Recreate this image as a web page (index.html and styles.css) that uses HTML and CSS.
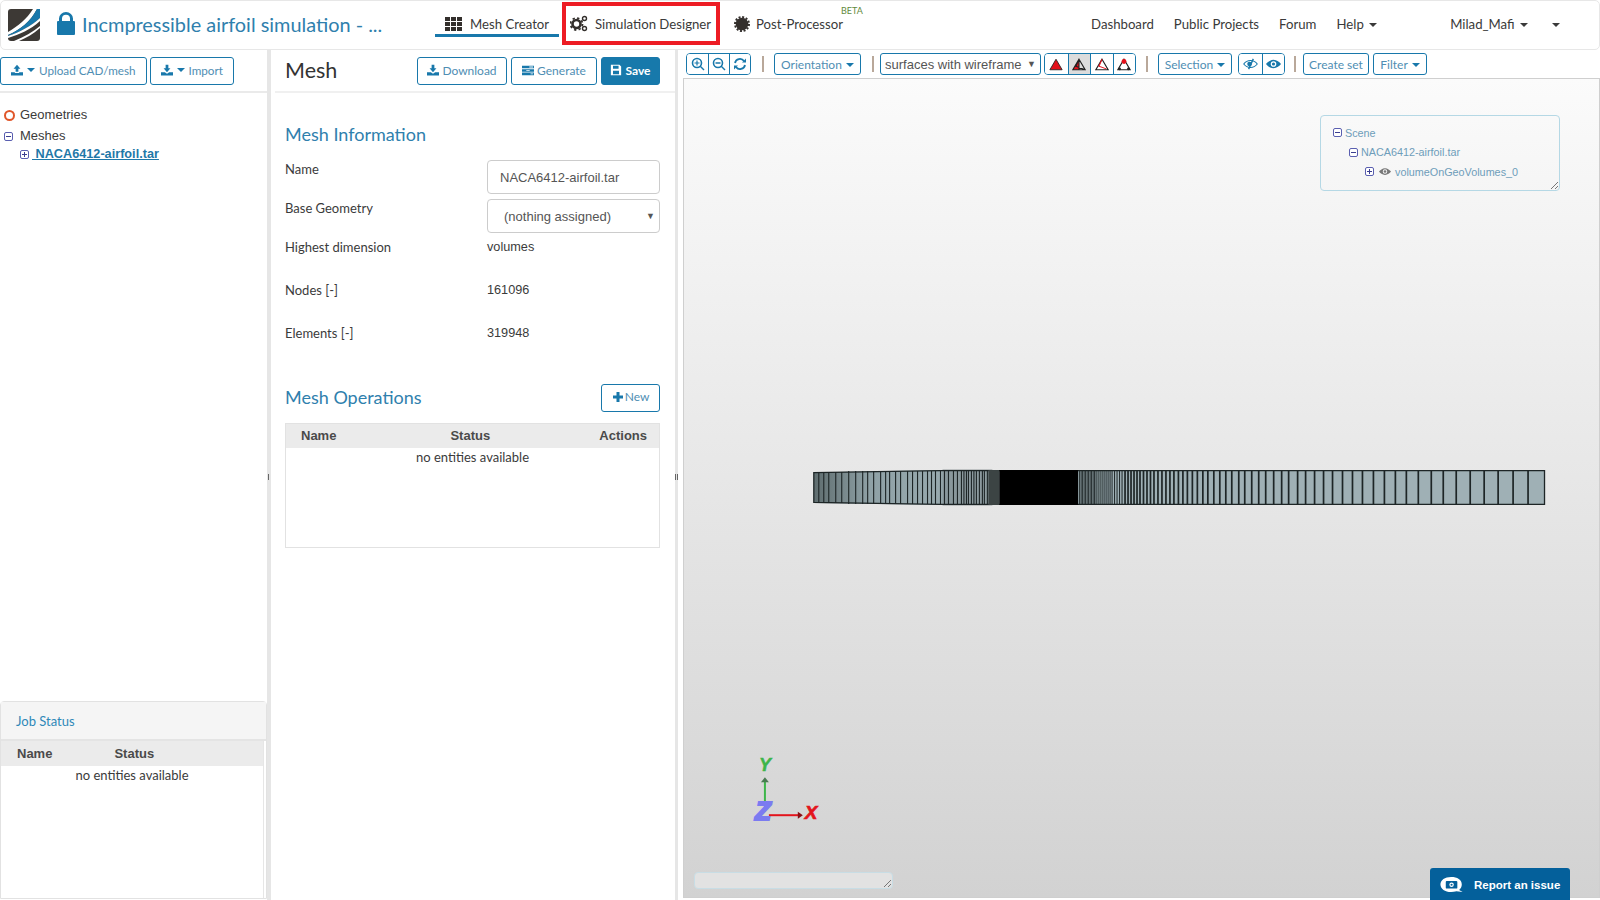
FILE: index.html
```html
<!DOCTYPE html>
<html lang="en">
<head>
<meta charset="utf-8">
<title>Incmpressible airfoil simulation</title>
<link rel="stylesheet" href="styles.css">
</head>
<body>
<svg class="defs" width="0" height="0" aria-hidden="true">
  <symbol id="i-upload" viewBox="0 0 14 14"><path d="M7 1 11 5.500H8.600V9H5.400V5.500H3z"/><path d="M0 9.500H4.500V10.500H9.500V9.500H14V13.500H0z"/></symbol>
  <symbol id="i-download" viewBox="0 0 14 14"><path d="M5.400 1H8.600V5H11L7 9.500 3 5H5.400z"/><path d="M0 9.500H4.500L7 11.500 9.500 9.500H14V13.500H0z"/></symbol>
  <symbol id="i-tasks" viewBox="0 0 14 14"><path d="M0 2H14V5H0zM0 6H14V9H0zM0 10H14V13H0z"/><path fill="#fff" d="M8.500 3H13V4H8.500zM5 7H9V8H5zM10 11H13V12H10z"/></symbol>
  <symbol id="i-save" viewBox="0 0 14 14"><path fill-rule="evenodd" d="M1 1H11L13 3V13H1zM3.500 2V5.500H10V2zM3.500 8V12H10.500V8z"/></symbol>
  <symbol id="i-plus" viewBox="0 0 12 12"><path d="M4.500 1H7.500V4.500H11V7.500H7.500V11H4.500V7.500H1V4.500H4.500z"/></symbol>
  <symbol id="i-zin" viewBox="0 0 14 14"><circle cx="6" cy="6" r="4.500" fill="none" stroke="currentColor" stroke-width="1.600"/><path d="M9.500 8.500 13.500 12.500 12.500 13.500 8.500 9.500zM5.400 3.500H6.600V5.400H8.500V6.600H6.600V8.500H5.400V6.600H3.500V5.400H5.400z"/></symbol>
  <symbol id="i-zout" viewBox="0 0 14 14"><circle cx="6" cy="6" r="4.500" fill="none" stroke="currentColor" stroke-width="1.600"/><path d="M9.500 8.500 13.500 12.500 12.500 13.500 8.500 9.500zM3.500 5.300H8.500V6.700H3.500z"/></symbol>
  <symbol id="i-sync" viewBox="0 0 14 14"><path fill="none" stroke="currentColor" stroke-width="1.800" d="M2 6A5 5 0 0 1 11 4M12 8A5 5 0 0 1 3 10"/><path d="M9 5.500H13V1.500zM5 8.500H1V12.500z"/></symbol>
  <symbol id="i-eye" viewBox="0 0 16 12"><path fill-rule="evenodd" d="M8 1.500C11.500 1.500 14.500 4 16 6 14.500 8 11.500 10.500 8 10.500S1.500 8 0 6C1.500 4 4.500 1.500 8 1.500ZM8 3A3 3 0 1 0 8 9 3 3 0 1 0 8 3Z"/><circle cx="8" cy="6" r="1.700"/></symbol>
  <symbol id="i-eyeoff" viewBox="0 0 16 12"><path fill="none" stroke="currentColor" stroke-width="1.200" d="M.8 6C2.500 3.800 5 2.300 8 2.300S13.500 3.800 15.200 6C13.500 8.200 11 9.700 8 9.700S2.500 8.200.8 6Z"/><circle cx="7" cy="6" r="2.500"/><path stroke="currentColor" stroke-width="1.500" d="M11 .5 6 11.500"/></symbol>
  <symbol id="i-tree-minus" viewBox="0 0 9 9"><rect x=".5" y=".5" width="8" height="8" rx="1.500" fill="#fff" stroke="#5a5fb0"/><path stroke="#3c3f90" d="M2 4.500H7"/></symbol>
  <symbol id="i-tree-plus" viewBox="0 0 9 9"><rect x=".5" y=".5" width="8" height="8" rx="1.500" fill="#fff" stroke="#5a5fb0"/><path stroke="#3c3f90" d="M2 4.500H7M4.500 2V7"/></symbol>
</svg>

<div class="app">
  <header class="nav">
    <svg class="logo" viewBox="0 0 32 32">
      <rect width="32" height="32" rx="3" fill="#3d3935"/>
      <path fill="#fff" d="M0 23C10 17 19 10 25 0H29C23 12 12 21 0 26Z"/>
      <path fill="#1878ab" d="M0 26C12 21 23 12 29 0H32V9C23 17 12 23 0 27Z" />
      <path fill="#fff" d="M0 27C12 23 23 17 32 9V12C22 21 12 25 0 29Z"/>
      <path fill="#fff" d="M6 32C16 28 25 23 32 17V19C25 25 18 29 11 32Z"/>
    </svg>
    <svg class="lock" viewBox="0 0 18 23"><path fill="#1878ab" fill-rule="evenodd" d="M2 9V6.500A7 6.500 0 0 1 16 6.500V9H17A1 1 0 0 1 18 10V22A1 1 0 0 1 17 23H1A1 1 0 0 1 0 22V10A1 1 0 0 1 1 9ZM5 9H13V6.500A4 3.800 0 0 0 5 6.500Z"/></svg>
    <div class="project-title">Incmpressible airfoil simulation - ...</div>
    <a class="tab tab-active">
      <svg class="tab-icon" viewBox="0 0 17 14"><path fill="#332f2c" d="M0 0H5V4H0zM6 0H11V4H6zM12 0H17V4H12zM0 5H5V9H0zM6 5H11V9H6zM12 5H17V9H12zM0 10H5V14H0zM6 10H11V14H6zM12 10H17V14H12z"/></svg>
      Mesh Creator
    </a>
    <a class="tab tab-marked">
      <svg class="tab-icon gears" viewBox="0 0 18 17"><circle cx="6.500" cy="9" r="4" fill="none" stroke="#332f2c" stroke-width="2.600"/><circle cx="6.500" cy="9" r="6" fill="none" stroke="#332f2c" stroke-width="1.800" stroke-dasharray="2.300 2.400"/><circle cx="14.500" cy="3.500" r="2" fill="none" stroke="#332f2c" stroke-width="1.400"/><circle cx="14.500" cy="13.500" r="2" fill="none" stroke="#332f2c" stroke-width="1.400"/></svg>
      Simulation Designer
    </a>
    <a class="tab tab-post">
      <svg class="tab-icon sun" viewBox="0 0 16 16"><circle cx="8" cy="8" r="6.300" fill="#332f2c"/><circle cx="8" cy="8" r="7" fill="none" stroke="#332f2c" stroke-width="2" stroke-dasharray="2 1.660"/></svg>
      Post-Processor
      <sup class="beta">BETA</sup>
    </a>
    <nav class="links">
      <a class="link">Dashboard</a>
      <a class="link">Public Projects</a>
      <a class="link">Forum</a>
      <a class="link">Help <i class="caret"></i></a>
      <a class="link link-user">Milad_Mafi <i class="caret"></i></a>
      <a class="link link-more"><i class="caret"></i></a>
    </nav>
  </header>

  <main class="main">
    <aside class="left">
      <div class="left-bar">
        <button class="btn btn-split"><svg class="ic"><use href="#i-upload"/></svg><i class="caret"></i>Upload CAD/mesh</button>
        <button class="btn btn-split"><svg class="ic"><use href="#i-download"/></svg><i class="caret"></i>Import</button>
      </div>
      <ul class="tree">
        <li class="tree-row"><span class="ring"></span>Geometries</li>
        <li class="tree-row tree-row-meshes"><svg class="tog"><use href="#i-tree-minus"/></svg>Meshes</li>
        <li class="tree-row tree-row-file"><svg class="tog"><use href="#i-tree-plus"/></svg><a class="file-link">&nbsp;NACA6412-airfoil.tar</a></li>
      </ul>
      <section class="job">
        <div class="job-head">Job Status</div>
        <div class="job-body">
          <div class="job-cols"><span class="job-name">Name</span><span class="job-status">Status</span></div>
          <div class="empty">no entities available</div>
        </div>
      </section>
    </aside>
    <div class="split"><span class="grip"></span></div>

    <section class="mid">
      <div class="mid-head">
        <h1 class="mesh-title">Mesh</h1>
        <button class="btn btn-dl"><svg class="ic ic-s"><use href="#i-download"/></svg>Download</button>
        <button class="btn btn-gen"><svg class="ic ic-s"><use href="#i-tasks"/></svg>Generate</button>
        <button class="btn btn-save"><svg class="ic ic-s"><use href="#i-save"/></svg>Save</button>
      </div>
      <div class="mid-body">
        <h2 class="section-title info-title">Mesh Information</h2>
        <div class="form">
          <div class="lbl">Name</div><div><div class="field field-name">NACA6412-airfoil.tar</div></div>
          <div class="lbl">Base Geometry</div><div><div class="field field-select">(nothing assigned)<span class="arrow">▼</span></div></div>
          <div class="lbl">Highest dimension</div><div class="val">volumes</div>
          <div class="lbl">Nodes [-]</div><div class="val">161096</div>
          <div class="lbl">Elements [-]</div><div class="val">319948</div>
        </div>
        <div class="ops-head">
          <h2 class="section-title ops-title">Mesh Operations</h2>
          <button class="btn btn-new"><svg class="ic ic-p"><use href="#i-plus"/></svg>New</button>
        </div>
        <div class="ops">
          <div class="ops-cols"><span class="c-name">Name</span><span class="c-status">Status</span><span class="c-actions">Actions</span></div>
          <div class="empty">no entities available</div>
        </div>
      </div>
    </section>
    <div class="split split-mid"><span class="grip grip-double"></span></div>

    <section class="right">
      <div class="tools">
        <div class="group">
          <button class="gbtn"><svg class="ic ic-t"><use href="#i-zin"/></svg></button>
          <button class="gbtn"><svg class="ic ic-t"><use href="#i-zout"/></svg></button>
          <button class="gbtn"><svg class="ic ic-t"><use href="#i-sync"/></svg></button>
        </div>
        <span class="sep sep-a"></span>
        <button class="tbtn tbtn-orient">Orientation <i class="caret"></i></button>
        <span class="sep sep-b"></span>
        <div class="render-select">surfaces with wireframe<span class="arrow">▼</span></div>
        <div class="group group-modes">
          <button class="gbtn mode"><svg class="tri" viewBox="0 0 16 14"><path fill="#e3101a" stroke="#222" stroke-width="1" d="M8 1 15 13H1z"/></svg></button>
          <button class="gbtn mode mode-on"><svg class="tri" viewBox="0 0 16 14"><path fill="#e3101a" d="M8 1 8 13H1z"/><path fill="none" stroke="#222" stroke-width="1.300" d="M8 1 15 13H1zM8 1V13M8 1 4.500 9 15 13"/></svg></button>
          <button class="gbtn mode"><svg class="tri" viewBox="0 0 16 14"><path fill="none" stroke="#222" stroke-width="1.300" d="M8 1 15 13H1z"/><path fill="none" stroke="#e3101a" stroke-width="1.200" d="M8 1 4.500 9 13 12"/></svg></button>
          <button class="gbtn mode"><svg class="tri" viewBox="0 0 16 14"><path fill="none" stroke="#222" stroke-width="1.300" d="M8 1 15 13H1z"/><circle cx="8" cy="3.500" r="2.800" fill="#e3101a"/><circle cx="3" cy="12" r="1.500" fill="#222"/><circle cx="13" cy="12" r="1.500" fill="#222"/></svg></button>
        </div>
        <span class="sep sep-c"></span>
        <button class="tbtn tbtn-sel">Selection <i class="caret"></i></button>
        <div class="group group-eyes">
          <button class="gbtn"><svg class="ic ic-e"><use href="#i-eyeoff"/></svg></button>
          <button class="gbtn"><svg class="ic ic-e"><use href="#i-eye"/></svg></button>
        </div>
        <span class="sep sep-d"></span>
        <button class="tbtn tbtn-set">Create set</button>
        <button class="tbtn tbtn-filter">Filter <i class="caret"></i></button>
      </div>

      <div class="canvas">
        <svg class="scene" viewBox="683 78 917 820">
          <defs>
            <linearGradient id="barfill" x1="813" x2="1000" y1="0" y2="0" gradientUnits="userSpaceOnUse">
              <stop offset="0" stop-color="#5f6d6f"/><stop offset=".3" stop-color="#8fa1a6"/><stop offset="1" stop-color="#9fb0b5"/>
            </linearGradient>
          </defs>
          <path d="M813 472.500 940 470H1546V505H940L813 503Z" fill="url(#barfill)"/>
          <rect x="1078" y="470" width="468" height="35" fill="#9fb0b5"/>
          <rect x="942" y="469" width="50" height="37" fill="#6c7678" opacity=".35"/>
          <path fill="none" stroke="#1d2526" stroke-width="1.300" d="M813 472.500 940 470.500H1545.500V504.500H940L813 502.500Z"/>
          <path fill="none" stroke="#1d2526" stroke-width="1.100" d="M818 472V503M823 472V503M828 472V503M835 472V503M841 472V503M848 471V504M855 471V504M862 471V504M867 471V504M873 471V504M880 471V504M885 471V504M889 471V504M895 471V504M900 471V504M907 471V504M912 471V504M917 471V504M922 471V504M927 471V504M931 471V504M935 471V504M940 470V505M944 470V505M948 470V505M953 470V505M957 470V505M961 470V505M963.500 470V505M966 470V505M968 470V505M971 470V505M973.500 470V505M976 470V505M979 470V505M982 470V505M984 470V505M987 470V505"/>
          <rect x="988" y="470" width="11" height="35" fill="#3c4444"/>
          <rect x="999" y="470" width="79" height="35" fill="#000"/>
          <path fill="none" stroke="#1d2526" stroke-width="1" d="M1079.500 470V505M1081 470V505M1082.500 470V505M1084 470V505M1085.500 470V505M1087 470V505M1088.500 470V505M1090 470V505M1091.500 470V505M1093 470V505M1094.500 470V505M1096 470V505M1098 470V505M1100 470V505M1102 470V505M1104 470V505M1106 470V505M1108 470V505M1110 470V505M1112 470V505M1114.500 470V505M1117 470V505M1119.500 470V505M1122 470V505"/>
          <path fill="none" stroke="#1d2526" stroke-width="1.700" d="M1125 470V505M1128 470V505M1131 470V505M1134 470V505M1137 470V505M1140 470V505M1143.500 470V505M1147 470V505M1150.500 470V505M1154 470V505M1158 470V505M1162 470V505M1166 470V505M1170 470V505M1174 470V505M1178.500 470V505M1183 470V505M1187.500 470V505M1192.500 470V505M1197.500 470V505M1203 470V505M1208 470V505M1214 470V505M1220 470V505M1226 470V505M1232 470V505M1239 470V505M1245 470V505M1252 470V505M1259 470V505M1266 470V505M1274 470V505M1282 470V505M1289 470V505M1298 470V505M1306 470V505M1315 470V505M1324 470V505M1333 470V505M1343 470V505M1353 470V505M1363 470V505M1374 470V505M1385 470V505M1396 470V505M1407 470V505M1419 470V505M1432 470V505M1444 470V505M1457 470V505M1471 470V505M1485 470V505M1499 470V505M1514 470V505M1529 470V505"/>

          <path stroke="#3db54a" stroke-width="2" d="M764 782V812"/>
          <path fill="#4a7a52" d="M764 778 768 783H760z"/>
          <path stroke="#e3141c" stroke-width="2" d="M768 816H798"/>
          <path fill="#8a1016" d="M802 816 797 812.500V819.500z"/>
          <text class="ax ax-y" x="758" y="772">Y</text>
          <text class="ax ax-x" x="804" y="820">X</text>
          <text class="ax ax-z" x="754" y="821">Z</text>
        </svg>

        <div class="scene-tree">
          <div class="st st-0"><svg class="tog"><use href="#i-tree-minus"/></svg>Scene</div>
          <div class="st st-1"><svg class="tog"><use href="#i-tree-minus"/></svg>NACA6412-airfoil.tar</div>
          <div class="st st-2"><svg class="tog"><use href="#i-tree-plus"/></svg><svg class="st-eye"><use href="#i-eye"/></svg>volumeOnGeoVolumes_0</div>
          <svg class="resize" viewBox="0 0 8 8"><path stroke="#777" d="M1 8 8 1M5 8 8 5"/></svg>
        </div>
        <div class="statusbox"><svg class="resize" viewBox="0 0 8 8"><path stroke="#777" d="M1 8 8 1M5 8 8 5"/></svg></div>
      </div>
    </section>
  </main>

  <a class="report">
    <svg class="report-ic" viewBox="0 0 26 18"><path fill="#fff" d="M12 0C19 0 24 3 24 8.500 24 11 23 13 21 14.500L25 17 18 16C16 16.500 14 17 12 17 5 17 0 13.500 0 8.500S5 0 12 0Z"/><rect x="6" y="4.500" width="13" height="8.500" rx="1" fill="#04609b"/><circle cx="12.500" cy="8.700" r="2.500" fill="#fff"/><circle cx="12.500" cy="8.700" r="1.200" fill="#04609b"/></svg>
    Report an issue
  </a>
</div>
</body>
</html>
```
FILE: styles.css
```css
* { box-sizing: border-box; }
html, body { margin: 0; padding: 0; height: 100%; }
body { font-family: "Lato", "Liberation Sans", sans-serif; font-size: 14px; color: #333; background: #fff; overflow: hidden; }
.defs { position: absolute; }
.app { position: relative; width: 1600px; height: 900px; display: flex; flex-direction: column; }
svg { fill: currentColor; }
button { font-family: inherit; }

/* top bar */
.nav { height: 50px; flex: none; display: flex; align-items: center; border: 1px solid #e7e7e7; border-radius: 5px; background: #fff; }
.logo { width: 32px; height: 32px; margin-left: 7px; flex: none; }
.lock { width: 18px; height: 23px; margin-left: 17px; margin-bottom: 3px; flex: none; }
.project-title { width: 353px; margin-left: 7px; padding-bottom: 3px; font-size: 19.900px; color: #2f80ad; white-space: nowrap; flex: none; }
.tab { display: flex; align-items: center; color: #3a3a3a; font-size: 13.200px; white-space: nowrap; flex: none; }
.tab-icon { flex: none; }
.tab-active { width: 124px; height: 37px; margin-top: -1px; align-self: flex-start; padding: 14px 0 0 10px; border-bottom: 3px solid #1878ab; gap: 8px; }
.tab-active .tab-icon { width: 17px; height: 14px; }
.tab-marked { width: 158px; height: 43px; align-self: flex-start; margin: 1px 0 0 3px; border: 4.500px solid #ed1c24; padding-left: 4px; gap: 7px; }
.gears { width: 18px; height: 17px; }
.tab-post { position: relative; margin-left: 14px; gap: 6px; align-self: flex-start; height: 37px; margin-top: 4px; }
.sun { width: 16px; height: 16px; }
.beta { position: absolute; left: 107px; top: 1px; font-size: 9px; line-height: 9px; color: #5f8a3c; }
.links { margin-left: auto; display: flex; align-items: center; margin-top: -3px; }
.link { color: #3a3a3a; font-size: 13.200px; margin-right: 20px; white-space: nowrap; }
.link-user { margin-left: 53px; margin-right: 22px; }
.link-more { margin-right: 39px; }
.caret { display: inline-block; width: 0; height: 0; border-left: 4px solid transparent; border-right: 4px solid transparent; border-top: 4px solid currentColor; vertical-align: middle; margin-left: 2px; }

/* columns */
.main { flex: 1; display: flex; min-height: 0; }
.left { width: 267px; flex: none; display: flex; flex-direction: column; }
.split { width: 4px; flex: none; background: #e6e6e6; position: relative; }
.split-mid { width: 3px; }
.grip { position: absolute; top: 424px; left: 1px; width: 1px; height: 6px; background: #666; }
.grip-double { width: 3px; left: 0; background: none; border-left: 1px solid #666; border-right: 1px solid #666; }

/* buttons */
.btn { height: 28px; display: inline-flex; align-items: center; border: 1px solid #1878ab; border-radius: 3px; background: #fff; color: #4f8eb3; font-size: 12px; padding: 0 0 2px; white-space: nowrap; flex: none; }
.btn-split { padding: 0 10px 2px; font-size: 11.700px; }
.btn .caret { margin: 0 4px; color: #1878ab; }
.ic { width: 12px; height: 12px; color: #1878ab; flex: none; }
.ic-s { width: 12px; height: 12px; margin-right: 3px; }
.ic-p { width: 12px; height: 12px; margin-right: 1px; }

/* left */
.left-bar { height: 43px; padding-top: 7px; display: flex; gap: 3px; align-items: flex-start; border-bottom: 2px solid #eaeaea; }
.tree { list-style: none; margin: 0; padding: 13px 0 0 0; flex: 1; font-family: "Liberation Sans", sans-serif; font-size: 13px; color: #3b3b3b; }
.tree-row { display: flex; align-items: center; height: 18px; line-height: 18px; }
.ring { width: 11px; height: 11px; border: 2px solid #e0562a; border-radius: 50%; margin: 0 5px 0 4px; flex: none; }
.tree-row-meshes { margin-top: 3px; }
.tog { width: 9px; height: 9px; flex: none; }
.tree-row-meshes .tog { margin: 0 7px 0 4px; }
.tree-row-file { margin-top: 0; padding-left: 20px; }
.file-link { font-weight: bold; font-size: 12.700px; color: #1f78a8; text-decoration: underline; margin-left: 3px; }
.job { flex: none; height: 198px; margin: 0 0 1px 0; border: 1px solid #e2e2e2; border-radius: 4px 4px 0 0; display: flex; flex-direction: column; }
.job-head { height: 39px; flex: none; background: #f5f5f5; color: #2f88b8; font-size: 13px; line-height: 38px; padding-left: 15px; border-bottom: 2px solid #e4e4e4; }
.job-body { flex: 1; margin-right: 2px; border-right: 1px solid #e6e6e6; }
.job-cols { height: 25px; background: #ebebeb; display: flex; align-items: center; font-family: "Liberation Sans", sans-serif; font-weight: bold; font-size: 13px; color: #4a4a4a; }
.job-name { margin-left: 16px; }
.job-status { margin-left: 62px; }
.empty { text-align: center; font-size: 13px; color: #3b3b3b; line-height: 18px; }

/* middle */
.mid { width: 404px; flex: none; display: flex; flex-direction: column; }
.mid-head { height: 43px; margin-left: 4px; padding: 7px 15px 0 10px; display: flex; align-items: flex-start; border-bottom: 2px solid #f0f0f0; }
.mesh-title { margin: 1px auto 0 0; font-size: 21.500px; font-weight: 400; line-height: 25px; color: #333; }
.btn-dl { margin-right: 4px; width: 90px; justify-content: center; }
.btn-gen { margin-right: 4px; width: 86px; justify-content: center; }
.btn-save { width: 59px; justify-content: center; background: #1779ab; color: #fff; font-weight: 700; }
.btn-save .ic { color: #fff; }
.mid-body { padding: 0 15px 0 14px; }
.section-title { margin: 0; font-size: 18px; font-weight: 400; line-height: 24px; color: #2f80ad; }
.info-title { margin-top: 29px; }
.form { display: grid; grid-template-columns: 202px 173px; grid-template-rows: 39px 39px 43px 43px 43px; margin-top: 13px; font-size: 13px; }
.lbl { line-height: 20px; color: #3b3b3b; }
.val { color: #3b3b3b; line-height: 18px; margin-top: 1px; font-size: 12.700px; font-family: "Liberation Sans", sans-serif; }
.field { position: relative; height: 34px; margin-top: 1px; border: 1px solid #ccc; border-radius: 4px; font-family: "Liberation Sans", sans-serif; font-size: 13px; line-height: 33px; color: #555; }
.field-name { padding-left: 12px; }
.field-select { padding-left: 16px; }
.arrow { position: absolute; right: 4px; top: 0; font-size: 9px; color: #555; }
.ops-head { display: flex; justify-content: space-between; align-items: center; height: 27px; margin-top: 18px; }
.ops-title { margin-bottom: 2px; }
.btn-new { width: 59px; justify-content: center; }
.ops { height: 125px; margin-top: 12px; border: 1px solid #e2e2e2; }
.ops-cols { height: 24px; padding-bottom: 2px; background: #ebebeb; display: flex; align-items: center; font-family: "Liberation Sans", sans-serif; font-weight: bold; font-size: 13px; color: #4a4a4a; }
.c-name { margin-left: 15px; }
.c-status { margin-left: 114px; }
.c-actions { margin-left: auto; margin-right: 12px; }

/* right */
.right { flex: 1; min-width: 0; display: flex; flex-direction: column; padding: 0 0 2px 5px; }
.tools { height: 28px; flex: none; display: flex; align-items: flex-start; padding: 3px 0 0 3px; }
.group { display: flex; height: 22px; border: 1px solid #1878ab; border-radius: 4px; overflow: hidden; flex: none; background: #fff; }
.gbtn { width: 21px; height: 20px; padding: 0; border: 0; border-left: 1px solid #1878ab; background: #fff; display: flex; align-items: center; justify-content: center; }
.gbtn:first-child { border-left: 0; }
.ic-t { width: 14px; height: 14px; }
.ic-e { width: 15px; height: 12px; }
.mode { width: 22.500px; }
.mode-on { background: #dcdcdc; }
.tri { width: 14px; height: 13px; }
.tbtn { height: 22px; flex: none; padding: 0; border: 1px solid #1878ab; border-radius: 3px; background: #fff; color: #4f8eb3; font-size: 12px; white-space: nowrap; }
.tbtn .caret { color: #1878ab; margin-left: 1px; }
.sep { width: 2px; height: 16px; margin-top: 3px; background: #b9a89a; flex: none; }
.sep-a { margin-left: 11px; }
.tbtn-orient { width: 87px; margin-left: 10px; }
.sep-b { margin-left: 11px; }
.render-select { position: relative; width: 161px; height: 22px; margin-left: 6px; border: 1px solid #1878ab; border-radius: 3px; font-family: "Liberation Sans", sans-serif; font-size: 13px; line-height: 21px; padding-left: 4px; color: #555; flex: none; white-space: nowrap; }
.group-modes { margin-left: 3px; }
.sep-c { margin-left: 10px; }
.tbtn-sel { width: 74px; margin-left: 10px; }
.group-eyes { margin-left: 6px; }
.group-eyes .gbtn { width: 22.500px; }
.sep-d { margin-left: 9px; }
.tbtn-set { width: 66px; margin-left: 7px; }
.tbtn-filter { width: 54px; margin-left: 4px; }

/* 3d view */
.canvas { position: relative; flex: 1; min-height: 0; border: 1px solid #cfcfcf; background: linear-gradient(#fbfbfb, #d2d2d2); }
.scene { position: absolute; inset: 0; width: 100%; height: 100%; }
.ax { font-family: "Liberation Sans", sans-serif; font-weight: bold; font-style: italic; }
.ax-y { font-size: 18px; fill: #3db54a; stroke: #3db54a; stroke-width: .5px; }
.ax-x { font-size: 19px; fill: #e3141c; stroke: #e3141c; stroke-width: .7px; }
.ax-z { font-size: 26px; fill: #7b7bf0; stroke: #7b7bf0; stroke-width: 2px; }
.scene-tree { position: absolute; right: 39px; top: 36px; width: 240px; height: 76px; border: 1px solid #b5d8e5; border-radius: 4px; font-family: "Liberation Sans", sans-serif; font-size: 10.800px; color: #6e9dba; padding-top: 7px; }
.st { display: flex; align-items: center; height: 19.500px; }
.st .tog { margin-right: 3px; }
.st-0 { padding-left: 12px; }
.st-1 { padding-left: 28px; }
.st-2 { padding-left: 44px; }
.st-eye { width: 12px; height: 9px; margin: 0 4px 0 2px; color: #777; }
.resize { position: absolute; right: 1px; bottom: 1px; width: 8px; height: 8px; }
.statusbox { position: absolute; left: 10px; bottom: 8px; width: 199px; height: 17px; background: #e2e2e2; border: 1px solid #c8dde5; border-radius: 4px; }

/* feedback tab */
.report { position: absolute; left: 1430px; top: 868px; width: 140px; height: 32px; padding: 1px 0 0 10px; background: #04609b; border-radius: 3px 3px 0 0; color: #fff; font-family: "Liberation Sans", sans-serif; font-weight: bold; font-size: 11.500px; display: flex; align-items: center; gap: 10px; }
.report-ic { width: 24px; height: 16px; flex: none; }
```
